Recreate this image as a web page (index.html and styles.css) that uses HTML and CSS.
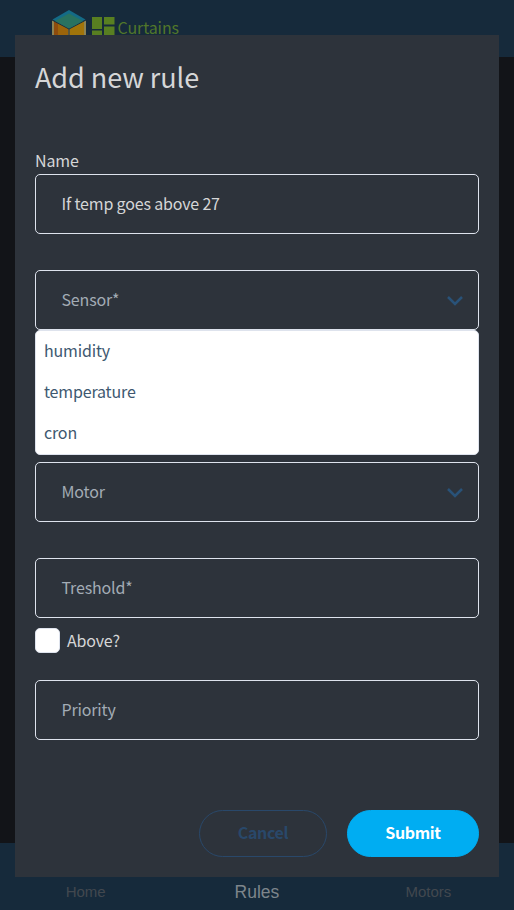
FILE: index.html
```html
<!DOCTYPE html>
<html lang="en">
<head>
<meta charset="utf-8">
<title>Curtains</title>
<link rel="stylesheet" href="styles.css">
</head>
<body>
<div class="app">
  <header class="header">
    <svg class="logo" width="34" height="38" viewBox="0 0 34 38">
      <path d="M0 10 17 19V38L0 29Z" fill="#8d8353"/>
      <path d="M34 10 17 19V38L34 29Z" fill="#8d8353"/>
      <path d="M2 11 16 18.500V37L2 29Z" fill="#8e4c0c"/>
      <path d="M6 13 16 18.500V37L6 31Z" fill="#9c640a"/>
      <path d="M32 11 18 18.500V37L32 29Z" fill="#a0740a"/>
      <path d="M16.500 18H17.500V38H16.500Z" fill="#252c2c"/>
      <path d="M0 9.500 17 18.500 34 9.500V10.500L17 19.500 0 10.500Z" fill="#162a3b"/>
      <path d="M17 0 33.500 9.500 17 18.500 0.500 9.500Z" fill="#146b87"/>
      <path d="M17 3.500 31 11 17 18.500 3 11Z" fill="#287260"/>
    </svg>
    <svg class="grid-icon" width="23" height="24" viewBox="0 0 23 24" fill="#587f21">
      <path d="M0 0H10V12H0ZM12 0H22.500V7.500H12ZM0 13.500H10V24H0ZM12 9.500H22.500V24H12Z"/>
    </svg>
    <span class="brand">Curtains</span>
  </header>
  <main class="content"></main>
  <nav class="tabs">
    <span class="tab">Home</span>
    <span class="tab tab-active">Rules</span>
    <span class="tab">Motors</span>
  </nav>
</div>
<form class="modal">
  <h1 class="title">Add new rule</h1>
  <label class="label">Name</label>
  <div class="field field-filled"><span>If temp goes above 27</span></div>
  <div class="select">
    <div class="field"><span>Sensor*</span>
      <svg class="chevron" width="18" height="12" viewBox="0 0 18 12"><path d="M2 2 9 9 16 2"/></svg>
    </div>
    <div class="menu">
      <div class="option">humidity</div>
      <div class="option">temperature</div>
      <div class="option">cron</div>
    </div>
  </div>
  <div class="field motor"><span>Motor</span>
    <svg class="chevron" width="18" height="12" viewBox="0 0 18 12"><path d="M2 2 9 9 16 2"/></svg>
  </div>
  <div class="field threshold"><span>Treshold*</span></div>
  <div class="check"><span class="box"></span><span class="check-label">Above?</span></div>
  <div class="field"><span>Priority</span></div>
  <div class="actions">
    <span class="btn cancel">Cancel</span>
    <span class="btn submit">Submit</span>
  </div>
</form>
</body>
</html>
```
FILE: styles.css
```css
* { box-sizing: border-box; }
body {
  margin: 0;
  height: 910px;
  overflow: hidden;
  background: #121418;
  font-family: "Noto Sans CJK SC", "Noto Sans", sans-serif;
  font-size: 16px;
  letter-spacing: -0.17px;
}
.app { display: flex; flex-direction: column; height: 910px; }
.header {
  display: flex;
  align-items: flex-start;
  height: 57px;
  padding: 10px 0 0 52px;
  background: #162a3b;
}
.grid-icon { margin: 7px 0 0 6px; }
.brand { margin: 5px 0 0 2.5px; color: #51772a; line-height: 24px; letter-spacing: -0.1px; }
.content { flex: 1; }
.tabs {
  display: grid;
  grid-template-columns: repeat(3, 1fr);
  height: 67px;
  padding-top: 38px;
  background: #162a3b;
  color: #42484f;
  font: 15px/22px "Liberation Sans", sans-serif;
  letter-spacing: 0;
  text-align: center;
}
.tab-active { color: #7d858b; font-size: 17.5px; }
.modal {
  position: absolute;
  left: 15px;
  top: 35px;
  width: 484px;
  height: 842px;
  padding: 20px;
  background: #2d333b;
}
.title {
  margin: 0;
  height: 96px;
  color: #d5d6d7;
  font-size: 27px;
  line-height: 44px;
  font-weight: 400;
  letter-spacing: -0.05px;
}
.label { display: block; height: 23px; line-height: 18px; color: #d5d6d7; }
.field {
  display: flex;
  align-items: center;
  justify-content: space-between;
  height: 60px;
  padding: 0 14px 0 25.5px;
  border: 1px solid #dee3ed;
  border-radius: 5px;
  color: #a3acb5;
}
.field span, .check-label { padding-bottom: 2px; }
.field-filled { margin-bottom: 36px; color: #d5d6d7; }
.chevron { fill: none; stroke: #295278; stroke-width: 2.5; margin-top: 2px; }
.select { position: relative; margin-bottom: 132px; }
.menu {
  position: absolute;
  top: 60px;
  left: 0;
  right: 0;
  height: 125px;
  border: 1px solid #dee3ed;
  border-radius: 5px;
  background: #fff;
}
.option { height: 41px; padding-left: 8px; line-height: 39px; color: #3e5870; }
.motor { margin-bottom: 36px; }
.check { display: flex; align-items: center; gap: 7px; height: 25px; margin: 10px 0 27px; color: #d5d6d7; }
.box { width: 25px; height: 25px; border: 1px solid #dee3ed; border-radius: 5px; background: #fff; }
.actions { display: flex; justify-content: flex-end; gap: 20px; margin-top: 70px; }
.btn {
  height: 47px;
  border-radius: 24px;
  font-weight: 700;
  line-height: 43px;
  letter-spacing: -0.35px;
  text-align: center;
}
.cancel { width: 128px; border: 1px solid #29486a; color: #29486a; }
.submit { width: 132px; border: 1px solid #00adf2; background: #00adf2; color: #fff; }
```
